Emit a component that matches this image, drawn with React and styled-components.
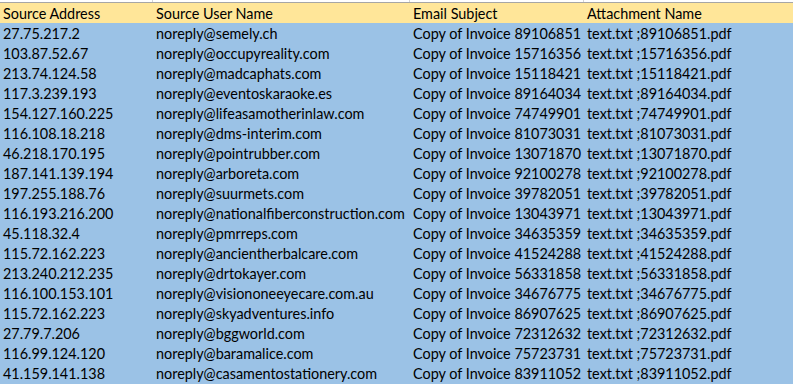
import styled, { createGlobalStyle } from 'styled-components';

const GlobalStyle = createGlobalStyle`
    html, body {
        margin: 0;
        padding: 0;
        background: #ffffff;
    }
    body {
        font-family: Lato, "Liberation Sans", sans-serif;
    }
`;

const rows = [
    ['27.75.217.2', 'noreply@semely.ch', '89106851'],
    ['103.87.52.67', 'noreply@occupyreality.com', '15716356'],
    ['213.74.124.58', 'noreply@madcaphats.com', '15118421'],
    ['117.3.239.193', 'noreply@eventoskaraoke.es', '89164034'],
    ['154.127.160.225', 'noreply@lifeasamotherinlaw.com', '74749901'],
    ['116.108.18.218', 'noreply@dms-interim.com', '81073031'],
    ['46.218.170.195', 'noreply@pointrubber.com', '13071870'],
    ['187.141.139.194', 'noreply@arboreta.com', '92100278'],
    ['197.255.188.76', 'noreply@suurmets.com', '39782051'],
    ['116.193.216.200', 'noreply@nationalfiberconstruction.com', '13043971'],
    ['45.118.32.4', 'noreply@pmrreps.com', '34635359'],
    ['115.72.162.223', 'noreply@ancientherbalcare.com', '41524288'],
    ['213.240.212.235', 'noreply@drtokayer.com', '56331858'],
    ['116.100.153.101', 'noreply@visiononeeyecare.com.au', '34676775'],
    ['115.72.162.223', 'noreply@skyadventures.info', '86907625'],
    ['27.79.7.206', 'noreply@bggworld.com', '72312632'],
    ['116.99.124.120', 'noreply@baramalice.com', '75723731'],
    ['41.159.141.138', 'noreply@casamentostationery.com', '83911052'],
];

const columns = '153px 257px 174px 1fr';

const Sheet = styled.div`
    width: 793px;
    height: 384px;
    overflow: hidden;
    background: #9bc2e6;
`;

const TopStrip = styled.div`
    display: grid;
    grid-template-columns: ${columns};
    height: 2px;
    background: #ffffff;
    border-bottom: 1px solid #a6a6a6;
`;

const StripCell = styled.div`
    border-right: 1px solid #d4d4d4;
`;

const Row = styled.div`
    display: grid;
    grid-template-columns: ${columns};
    height: 20px;
    align-items: center;
    background: ${p => (p.$header ? '#ffe699' : '#9bc2e6')};
`;

const Cell = styled.div`
    padding-left: 3px;
    font-size: 14.4px;
    color: #000000;
    white-space: nowrap;
    overflow: hidden;
`;

export default function App() {
    return (
        <>
            <GlobalStyle />
            <Sheet>
                <TopStrip>
                    <StripCell />
                    <StripCell />
                    <StripCell />
                    <div />
                </TopStrip>
                <Row $header>
                    <Cell>Source Address</Cell>
                    <Cell>Source User Name</Cell>
                    <Cell>Email Subject</Cell>
                    <Cell>Attachment Name</Cell>
                </Row>
                {rows.map(([ip, user, num], i) => (
                    <Row key={i}>
                        <Cell>{ip}</Cell>
                        <Cell>{user}</Cell>
                        <Cell>Copy of Invoice {num}</Cell>
                        <Cell>text.txt ;{num}.pdf</Cell>
                    </Row>
                ))}
            </Sheet>
        </>
    );
}
